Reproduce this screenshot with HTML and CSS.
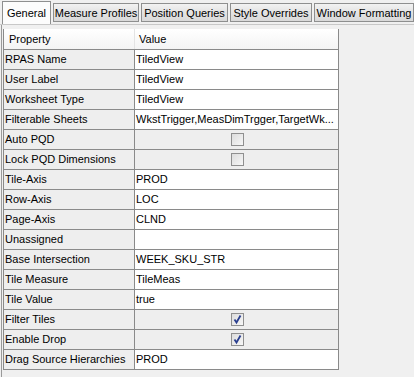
FILE: index.html
```html
<!DOCTYPE html>
<html>
<head>
<meta charset="utf-8">
<link rel="stylesheet" href="styles.css">
</head>
<body>
<div class="tabs">
  <div class="tab active t1">General</div>
  <div class="tab t2">Measure Profiles</div>
  <div class="tab t3">Position Queries</div>
  <div class="tab t4">Style Overrides</div>
  <div class="tab t5">Window Formatting</div>
</div>
<div class="panel">
  <div class="grid">
    <div class="hdr">Property</div><div class="hdr hv">Value</div>
    <div class="k">RPAS Name</div><div class="v">TiledView</div>
    <div class="k">User Label</div><div class="v">TiledView</div>
    <div class="k">Worksheet Type</div><div class="v">TiledView</div>
    <div class="k">Filterable Sheets</div><div class="v">WkstTrigger,MeasDimTrgger,TargetWk...</div>
    <div class="k">Auto PQD</div><div class="v cb"><span class="box"></span></div>
    <div class="k">Lock PQD Dimensions</div><div class="v cb"><span class="box"></span></div>
    <div class="k">Tile-Axis</div><div class="v">PROD</div>
    <div class="k">Row-Axis</div><div class="v">LOC</div>
    <div class="k">Page-Axis</div><div class="v">CLND</div>
    <div class="k">Unassigned</div><div class="v"></div>
    <div class="k">Base Intersection</div><div class="v">WEEK_SKU_STR</div>
    <div class="k">Tile Measure</div><div class="v">TileMeas</div>
    <div class="k">Tile Value</div><div class="v">true</div>
    <div class="k">Filter Tiles</div><div class="v cb"><span class="box"><svg width="11" height="11" viewBox="0 0 11 11"><path d="M2.5 5.5 L4.5 8.5 L8.5 1.5" fill="none" stroke="#2a3f8f" stroke-width="1.8"/></svg></span></div>
    <div class="k">Enable Drop</div><div class="v cb"><span class="box"><svg width="11" height="11" viewBox="0 0 11 11"><path d="M2.5 5.5 L4.5 8.5 L8.5 1.5" fill="none" stroke="#2a3f8f" stroke-width="1.8"/></svg></span></div>
    <div class="k">Drag Source Hierarchies</div><div class="v">PROD</div>
  </div>
</div>
</body>
</html>
```
FILE: styles.css
```css
html, body {
  margin: 0;
  padding: 0;
  background: #f0f0f0;
  font-family: "Liberation Sans", Arial, sans-serif;
  font-size: 11px;
  color: #000;
}
.tabs {
  display: flex;
  align-items: flex-end;
  height: 25px;
  padding-left: 2px;
  border-bottom: 1px solid #c8c8c8;
  box-sizing: border-box;
  white-space: nowrap;
  overflow: hidden;
}
.tab {
  height: 19px;
  line-height: 18px;
  padding: 0;
  text-align: center;
  margin-right: 2px;
  margin-bottom: 2px;
  border: 1px solid #8e8f8f;
  box-sizing: border-box;
  background: linear-gradient(#f2f2f2, #e3e3e3 50%, #d9d9d9);
  flex-shrink: 0;
  overflow: hidden;
}
.t1 { width: 49px; }
.t2 { width: 86px; }
.t3 { width: 87px; }
.t4 { width: 82px; }
.t5 { width: 100px; margin-right: 0; }
.tab.active {
  height: 24px;
  line-height: 22px;
  margin-bottom: -1px;
  border-bottom: none;
  background: #fcfcfc;
}
.panel {
  padding: 4px 0 0 1px;
  border-left: 1px solid #9a9a9a;
  margin-left: 1px;
  height: 352px;
  box-sizing: border-box;
}
.grid {
  display: grid;
  grid-template-columns: 131px 203px;
  grid-auto-rows: 20px;
  width: 334px;
  border-left: 1px solid #8a8a8a;
  border-bottom: 1px solid #8a8a8a;
  border-right: 1px solid #8a8a8a;
}
.hdr {
  background: linear-gradient(#ffffff, #f4f4f4);
  padding-left: 5px;
  line-height: 20px;
  border-right: 1px solid #e4e4e4;
}
.hdr.hv { border-right: none; padding-left: 4px; }
.k, .v {
  border-top: 1px solid #8a8a8a;
  line-height: 19px;
  white-space: nowrap;
  overflow: hidden;
}
.k {
  background: #eeeeee;
  border-right: 1px solid #8a8a8a;
  padding-left: 1px;
}
.v {
  background: #ffffff;
  padding-left: 1px;
  text-overflow: ellipsis;
}
.v.cb {
  background: #eeeeee;
  display: flex;
  align-items: center;
  justify-content: center;
}
.box {
  width: 11px;
  height: 11px;
  border: 1px solid #8f8f8f;
  background: linear-gradient(135deg, #dcdcdc, #f7f7f7);
  display: block;
}
.box svg { display: block; }
```
